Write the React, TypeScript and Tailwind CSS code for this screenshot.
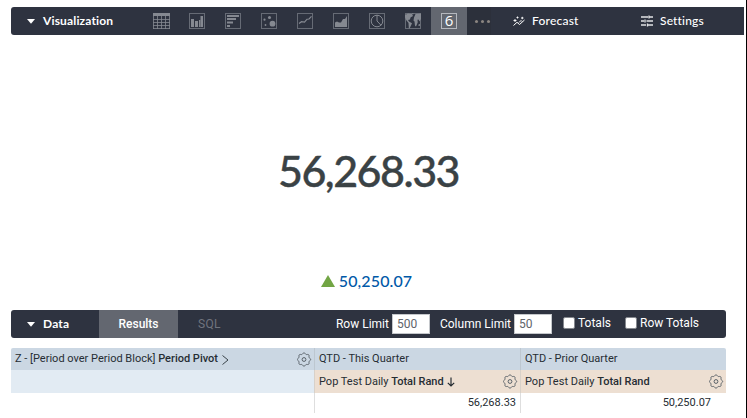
import type { ReactNode } from "react";

function Frame({ children }: { children: ReactNode }) {
  return (
    <svg width="18" height="18" viewBox="0 0 18 18" className="text-[#858991]" fill="currentColor">
      {children}
    </svg>
  );
}

const Box = () => <rect x="1.500" y="1.500" width="15" height="15" fill="none" stroke="#666b75" />;

const charts: ReactNode[] = [
  <>
    <path d="M1 1h17v3H1z" />
    <path d="M1.500 4v13M5.500 4v13M9.500 4v13M13.500 4v13M17.500 4v13M1 7.500h17M1 10.500h17M1 13.500h17M1 16.500h17" stroke="currentColor" strokeWidth=".8" fill="none" />
  </>,
  <>
    <Box />
    <path d="M3 7h3v8H3zM7 9h3v6H7zM11 8h1.200v7H11zM12.500 4h2.500V15h-2.500z" />
  </>,
  <>
    <Box />
    <path d="M3 3h12v2H3zM3 6h9v2H3zM3 9.500h6v2H3zM3 13h3v2H3z" />
  </>,
  <>
    <Box />
    <circle cx="9.500" cy="5.500" r="1.500" />
    <circle cx="4.500" cy="7.700" r="1.100" />
    <circle cx="12.500" cy="11.700" r="2.900" />
    <circle cx="5.500" cy="13" r=".9" />
  </>,
  <>
    <Box />
    <path d="M3 11.500 5.500 9.700l3 .5 2.500-3 2-.2 2.500-2.700" fill="none" stroke="currentColor" strokeWidth="1.200" />
  </>,
  <>
    <Box />
    <path d="M3 15V10.500l2-1 2 1h2L11 7h2l2-3v11z" />
  </>,
  <>
    <Box />
    <circle cx="9" cy="9" r="5.800" fill="none" stroke="currentColor" />
    <path d="M9 3v6l4 4.200" fill="none" stroke="currentColor" />
  </>,
  <>
    <Box />
    <path d="M1 3l3-1.500 4 .5 1 2-2.500 1.500L6 7.500 4 8l1 1.500 3 1.700L7 13.500l-1.500 3-.7-.5-.3-5L2.500 8.500 1 5.500zM10 5.500l1.500-3.500L17 1.500V7l-1.500 2.500-1-2-1 .3.200 2.700-1.700 4-1-.8-.5-4.200L9.500 8.500z" />
    <path d="m14.500 12.500 1.500-.5v1.800l-1.500.2zM8 1h1.500L9 3z" />
  </>,
];

const gearPath =
  Array.from({ length: 97 }, (_, i) => {
    const a = (i / 96) * Math.PI * 2;
    const r = 6.050 + 0.600 * Math.cos(8 * a);
    return `${i ? "L" : "M"}${(7 + r * Math.cos(a)).toFixed(2)} ${(7.5 + r * Math.sin(a)).toFixed(2)}`;
  }).join("") + "z";

function Gear() {
  return (
    <svg width="15" height="15" viewBox="0 0 15 15" fill="none" stroke="#596168" className="shrink-0">
      <path d={gearPath} />
      <circle cx="7" cy="7.500" r="1.900" />
    </svg>
  );
}

const Caret = () => (
  <svg width="8" height="5" viewBox="0 0 8 5" fill="white">
    <path d="M0 0h8L4 4.800z" />
  </svg>
);

function LimitField({ label, value }: { label: string; value: string }) {
  return (
    <label className="flex items-center gap-[3px] whitespace-nowrap">
      {label}
      <input readOnly value={value} className="h-5 w-[38px] border border-[#c4c7cb] bg-white pl-1 text-[12px] text-[#60656b]" />
    </label>
  );
}

function Check({ label }: { label: string }) {
  return (
    <label className="-mt-0.5 flex items-center gap-[3px] whitespace-nowrap">
      <input type="checkbox" className="size-3 appearance-none rounded-[2px] border border-[#85888e] bg-white" />
      {label}
    </label>
  );
}

export default function App() {
  return (
    <div className="flex h-[418px] w-[747px] border-r border-black bg-white font-['Roboto',sans-serif] text-[#262d33]">
      <div className="flex w-full flex-col pl-[11px] pt-[7px]">
        <header className="flex h-7 w-[733px] items-center overflow-hidden rounded-l-[3px] bg-[#2e3340] font-['Lato',sans-serif] text-[12px] text-white">
          <div className="flex w-[132px] items-center gap-2 pl-4">
            <Caret />
            <span className="font-bold tracking-[0.15px]">Visualization</span>
          </div>
          {charts.map((chart, i) => (
            <div key={i} className="flex h-7 w-9 items-center justify-center">
              <Frame>{chart}</Frame>
            </div>
          ))}
          <div className="flex h-7 w-9 items-center justify-center bg-[#636770]">
            <div className="flex size-4 items-center justify-center border border-[#b5b8be] pb-px font-['Open_Sans',sans-serif] text-[15px] leading-none">6</div>
          </div>
          <div className="flex h-7 w-6 items-center justify-end gap-[3px] bg-[#2c303b] pr-px">
            <i className="size-[3px] rounded-full bg-[#8b8581]" />
            <i className="size-[3px] rounded-full bg-[#8b8581]" />
            <i className="size-[3px] rounded-full bg-[#8b8581]" />
          </div>
          <div className="ml-[22px] flex w-[128px] items-center gap-[7px]">
            <svg width="12" height="12" viewBox="0 0 12 12" fill="none" stroke="white">
              <path d="M.500 10.500 4 7.300l2.500 2.200L11.500 5M6 7.500l2-2 1 1" />
              <path d="M.500 5.500h3M2 4v3M3.500 2.500h2M4.500 1.500v2M8 3h2.500M9.300 1.800v2.400" strokeWidth=".9" />
            </svg>
            <span className="font-medium tracking-[0.22px]">Forecast</span>
          </div>
          <div className="flex items-center gap-[7px]">
            <svg width="12" height="12" viewBox="0 0 12 12" stroke="#e2e3e5" strokeWidth="1.300" fill="none">
              <path d="M0 2h7M8.500 2H12M8 .5v3M0 6h3M5.500 6H12M4 4.500v3M0 10h5M7 10h5M6.500 8.500v3" />
            </svg>
            <span className="font-medium tracking-[0.15px]">Settings</span>
          </div>
        </header>

        <main className="flex h-[275px] w-[715px] flex-col items-center font-['Lato',sans-serif]">
          <div className="mt-[108px] h-[56px] whitespace-nowrap text-[43px] font-medium leading-[56px] tracking-[-1.500px] text-[#3a4245] [-webkit-text-stroke:0.4px_#3a4245]">56,268.33</div>
          <div className="mr-[4px] mt-[72px] flex h-5 items-center gap-1">
            <svg width="14" height="12" viewBox="0 0 14 12" fill="#72a544"><path d="M7 0l7 12H0z" /></svg>
            <span className="text-[16px] font-medium leading-5 tracking-[0.1px] text-[#0059a8]">50,250.07</span>
          </div>
        </main>

        <section className="flex h-7 w-[715px] items-center overflow-hidden rounded-[3px] bg-[#2e3340] text-[12px] text-white">
          <div className="flex w-[88px] items-center gap-2 pl-4">
            <Caret />
            <span className="font-['Lato',sans-serif] font-bold tracking-[0.15px]">Data</span>
          </div>
          <div className="flex h-7 w-[79px] items-center justify-center bg-[#636770] font-medium">Results</div>
          <div className="w-[117px] pl-5 tracking-[0.3px] text-[#70747e]">SQL</div>
          <div className="flex flex-1 items-center justify-end">
            <LimitField label="Row Limit" value="500" />
            <div className="ml-[10px]"><LimitField label="Column Limit" value="50" /></div>
            <div className="ml-[11px] w-[62px]"><Check label="Totals" /></div>
            <div className="w-[101px]"><Check label="Row Totals" /></div>
          </div>
        </section>

        <div className="mt-[10px] grid w-[715px] grid-cols-[303px_206px_206px] overflow-hidden rounded-t-[2px] text-[11px]">
          <div className="flex h-[22px] items-center bg-[#cbd7e3] pl-1 pr-[2px] pt-px">
            <span>Z - [Period over Period Block] <b className="font-medium">Period Pivot</b></span>
            <svg width="7" height="10" viewBox="0 0 7 10" fill="none" stroke="#394249" className="ml-1 mr-auto"><path d="m.5.5 5.500 4.500L.5 9.500" /></svg>
            <Gear />
          </div>
          <div className="flex items-center border-l border-[#bdc7d0] bg-[#cbd7e3] pl-1">QTD - This Quarter</div>
          <div className="flex items-center border-l border-[#bdc7d0] bg-[#cbd7e3] pl-1">QTD - Prior Quarter</div>
          <div className="h-[23px] bg-[#e2ebf3]" />
          <div className="flex items-center border-l border-[#d8d1c9] bg-[#eddfd2] pl-1 pr-[2px]">
            <span className="pt-px">Pop Test Daily <b className="font-medium">Total Rand</b></span>
            <svg width="8" height="10" viewBox="0 0 8 10" fill="none" stroke="#262d33" strokeWidth="1.200" className="ml-[3px] mr-auto"><path d="M4 .5V9M.8 5.800 4 9l3.200-3.200" /></svg>
            <Gear />
          </div>
          <div className="flex items-center justify-between border-l border-[#d8d1c9] bg-[#eddfd2] pl-1 pr-[2px]">
            <span className="pt-px">Pop Test Daily <b className="font-medium">Total Rand</b></span>
            <Gear />
          </div>
          <div className="h-5" />
          <div className="flex items-center justify-end border-l border-[#dedede] pr-1">56,268.33</div>
          <div className="flex items-center justify-end border-l border-[#dedede] pr-[15px]">50,250.07</div>
        </div>
      </div>
    </div>
  );
}
